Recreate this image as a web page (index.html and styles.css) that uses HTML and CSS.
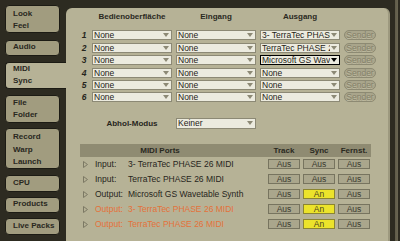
FILE: index.html
```html
<!DOCTYPE html>
<html lang="de">
<head>
<meta charset="utf-8">
<title>MIDI Sync</title>
<link rel="stylesheet" href="styles.css">
</head>
<body>
<div class="app">
  <nav class="tabs">
    <div class="tab t-look">Look<br>Feel</div>
    <div class="tab t-audio">Audio</div>
    <div class="tab t-midi active">MIDI<br>Sync</div>
    <div class="tab t-file">File<br>Folder</div>
    <div class="tab t-rec">Record<br>Warp<br>Launch</div>
    <div class="tab t-cpu">CPU</div>
    <div class="tab t-prod">Products</div>
    <div class="tab t-live">Live Packs</div>
  </nav>
  <main class="panel">
    <div class="routing">
      <div></div><div class="hd">Bedienoberfläche</div><div class="hd">Eingang</div><div class="hd">Ausgang</div><div></div>

      <div class="num">1</div>
      <div class="dd"><span class="v">None</span><span class="ar"></span></div>
      <div class="dd"><span class="v">None</span><span class="ar"></span></div>
      <div class="dd"><span class="v">3- TerraTec PHASE 26 MIDI</span><span class="ar"></span></div>
      <div class="snd">Sender</div>

      <div class="num">2</div>
      <div class="dd"><span class="v">None</span><span class="ar"></span></div>
      <div class="dd"><span class="v">None</span><span class="ar"></span></div>
      <div class="dd"><span class="v">TerraTec PHASE 26 MIDI</span><span class="ar"></span></div>
      <div class="snd">Sender</div>

      <div class="num">3</div>
      <div class="dd"><span class="v">None</span><span class="ar"></span></div>
      <div class="dd"><span class="v">None</span><span class="ar"></span></div>
      <div class="dd focus"><span class="v">Microsoft GS Wavetable Synth</span><span class="ar"></span></div>
      <div class="snd">Sender</div>

      <div class="num">4</div>
      <div class="dd"><span class="v">None</span><span class="ar"></span></div>
      <div class="dd"><span class="v">None</span><span class="ar"></span></div>
      <div class="dd"><span class="v">None</span><span class="ar"></span></div>
      <div class="snd">Sender</div>

      <div class="num">5</div>
      <div class="dd"><span class="v">None</span><span class="ar"></span></div>
      <div class="dd"><span class="v">None</span><span class="ar"></span></div>
      <div class="dd"><span class="v">None</span><span class="ar"></span></div>
      <div class="snd">Sender</div>

      <div class="num">6</div>
      <div class="dd"><span class="v">None</span><span class="ar"></span></div>
      <div class="dd"><span class="v">None</span><span class="ar"></span></div>
      <div class="dd"><span class="v">None</span><span class="ar"></span></div>
      <div class="snd">Sender</div>

      <div></div>
      <div class="abhol">Abhol-Modus</div>
      <div class="dd abhol-dd"><span class="v">Keiner</span><span class="ar"></span></div>
    </div>

    <div class="ports">
      <div class="ports-head">
        <div class="title">MIDI Ports</div>
        <div class="ch">Track</div>
        <div class="ch">Sync</div>
        <div class="ch">Fernst.</div>
      </div>
      <div class="port">
        <svg class="tri" width="5" height="7" viewBox="0 0 5 7"><polygon points="0.5,0.5 4.5,3.5 0.5,6.5"/></svg>
        <span>Input:</span><span>3- TerraTec PHASE 26 MIDI</span>
        <div class="btn">Aus</div><div class="btn">Aus</div><div class="btn">Aus</div>
      </div>
      <div class="port">
        <svg class="tri" width="5" height="7" viewBox="0 0 5 7"><polygon points="0.5,0.5 4.5,3.5 0.5,6.5"/></svg>
        <span>Input:</span><span>TerraTec PHASE 26 MIDI</span>
        <div class="btn">Aus</div><div class="btn">Aus</div><div class="btn">Aus</div>
      </div>
      <div class="port">
        <svg class="tri" width="5" height="7" viewBox="0 0 5 7"><polygon points="0.5,0.5 4.5,3.5 0.5,6.5"/></svg>
        <span>Output:</span><span>Microsoft GS Wavetable Synth</span>
        <div class="btn">Aus</div><div class="btn on">An</div><div class="btn">Aus</div>
      </div>
      <div class="port orange">
        <svg class="tri" width="5" height="7" viewBox="0 0 5 7"><polygon points="0.5,0.5 4.5,3.5 0.5,6.5"/></svg>
        <span>Output:</span><span>3- TerraTec PHASE 26 MIDI</span>
        <div class="btn">Aus</div><div class="btn on">An</div><div class="btn">Aus</div>
      </div>
      <div class="port orange">
        <svg class="tri" width="5" height="7" viewBox="0 0 5 7"><polygon points="0.5,0.5 4.5,3.5 0.5,6.5"/></svg>
        <span>Output:</span><span>TerraTec PHASE 26 MIDI</span>
        <div class="btn">Aus</div><div class="btn on">An</div><div class="btn">Aus</div>
      </div>
    </div>
  </main>
</div>
</body>
</html>
```
FILE: styles.css
```css
* { box-sizing: border-box; margin: 0; padding: 0; }
html, body { width: 400px; height: 241px; overflow: hidden; }
body {
  background: linear-gradient(to right, #2d2b21 0, #2d2b21 395px, #5e5a48 395px, #6a6652 398px, #2d2b21 398px);
  font-family: "Liberation Sans", Arial, sans-serif;
  font-size: 8.5px;
  color: #26251c;
}
.app { display: flex; height: 241px; }

/* sidebar tabs */
.tabs { width: 66px; flex: none; padding-left: 5px; display: flex; flex-direction: column; }
.tab {
  width: 55px;
  background: #a19c7f;
  border: 1px solid #1c1b14;
  border-radius: 4px;
  font-weight: bold;
  font-size: 8px;
  line-height: 12px;
  padding-left: 7px;
  color: #29281e;
}
.tab.active { width: 61px; background: #b6b296; border-right: none; border-radius: 4px 0 0 4px; }
.t-look { margin-top: 5px; height: 28px; padding-top: 2px; }
.t-audio { margin-top: 7px; height: 16px; padding-top: 0; }
.t-midi { margin-top: 6px; height: 27px; padding-top: 0; }
.t-file { margin-top: 6px; height: 28px; padding-top: 1px; }
.t-rec { margin-top: 5px; height: 41px; padding-top: 2px; line-height: 12.5px; }
.t-cpu { margin-top: 6px; height: 17px; padding-top: 1px; }
.t-prod { margin-top: 5px; height: 16px; padding-top: 0; }
.t-live { margin-top: 5px; height: 17px; padding-top: 1px; }

/* main panel */
.panel {
  margin-top: 8px;
  width: 324px;
  flex: none;
  background: #b6b296;
  border-radius: 6px 6px 0 0;
  border-right: 2px solid #9d997f;
  padding: 4px 0 0 14px;
}

.routing {
  display: grid;
  grid-template-columns: 8px 80px 80px 80px 32px;
  grid-template-rows: 16px repeat(6, 10px) 24px;
  column-gap: 4px;
  row-gap: 2.4px;
}
.hd { font-weight: bold; font-size: 8px; text-align: center; line-height: 10px; color: #2a291f; }
.num { font-weight: bold; font-style: italic; text-align: center; line-height: 10px; font-size: 8.5px; }

.dd {
  display: flex;
  align-items: center;
  min-width: 0;
  height: 10px;
  background: #ecebdf;
  border: 1px solid #8c8975;
  padding-left: 1px;
  color: #1f1e18;
  overflow: hidden;
}
.dd .v { flex: 1 1 0; min-width: 0; overflow: hidden; white-space: nowrap; line-height: 8px; }
.dd .ar {
  flex: none;
  width: 0; height: 0;
  border-left: 3px solid transparent;
  border-right: 3px solid transparent;
  border-top: 4px solid #8c8975;
  margin: 0 2px 0 1px;
}
.dd.focus { border-color: #000; }
.dd.focus .ar { border-top-color: #000; }

.snd {
  height: 10px;
  border: 1px solid #8d8a73;
  border-radius: 5px;
  background: #a9a58b;
  color: #838069;
  text-align: center;
  line-height: 8px;
  white-space: nowrap;
  text-shadow: 0 1px 0 #c0bca2;
}

.abhol { align-self: end; font-weight: bold; font-size: 8px; text-align: center; line-height: 11px; }
.abhol-dd { align-self: end; height: 11px; }

/* MIDI ports table */
.ports { margin-top: 15.2px; width: 291px; }
.ports-head, .port {
  display: grid;
  grid-template-columns: 12px 30px 1fr 32px 32px 32px;
  column-gap: 3px;
  align-items: center;
  padding-right: 1px;
}
.ports-head { height: 13px; background: #8f8b72; font-weight: bold; font-size: 8px; color: #2a291f; }
.ports-head .title { grid-column: 1 / 4; text-align: center; padding-right: 25px; }
.ports-head .ch { text-align: center; }
.port { height: 15px; white-space: nowrap; }
.tri { margin-left: 3px; display: block; }
.tri polygon { fill: none; stroke: #7c7964; stroke-width: 1; }
.port.orange { color: #e4713a; }

.btn {
  height: 10px;
  border: 1px solid #77745f;
  background: #aaa68c;
  color: #3b3a2f;
  text-align: center;
  line-height: 8px;
}
.btn.on { background: #ece32b; border-color: #8b8531; color: #4a4520; }
```
